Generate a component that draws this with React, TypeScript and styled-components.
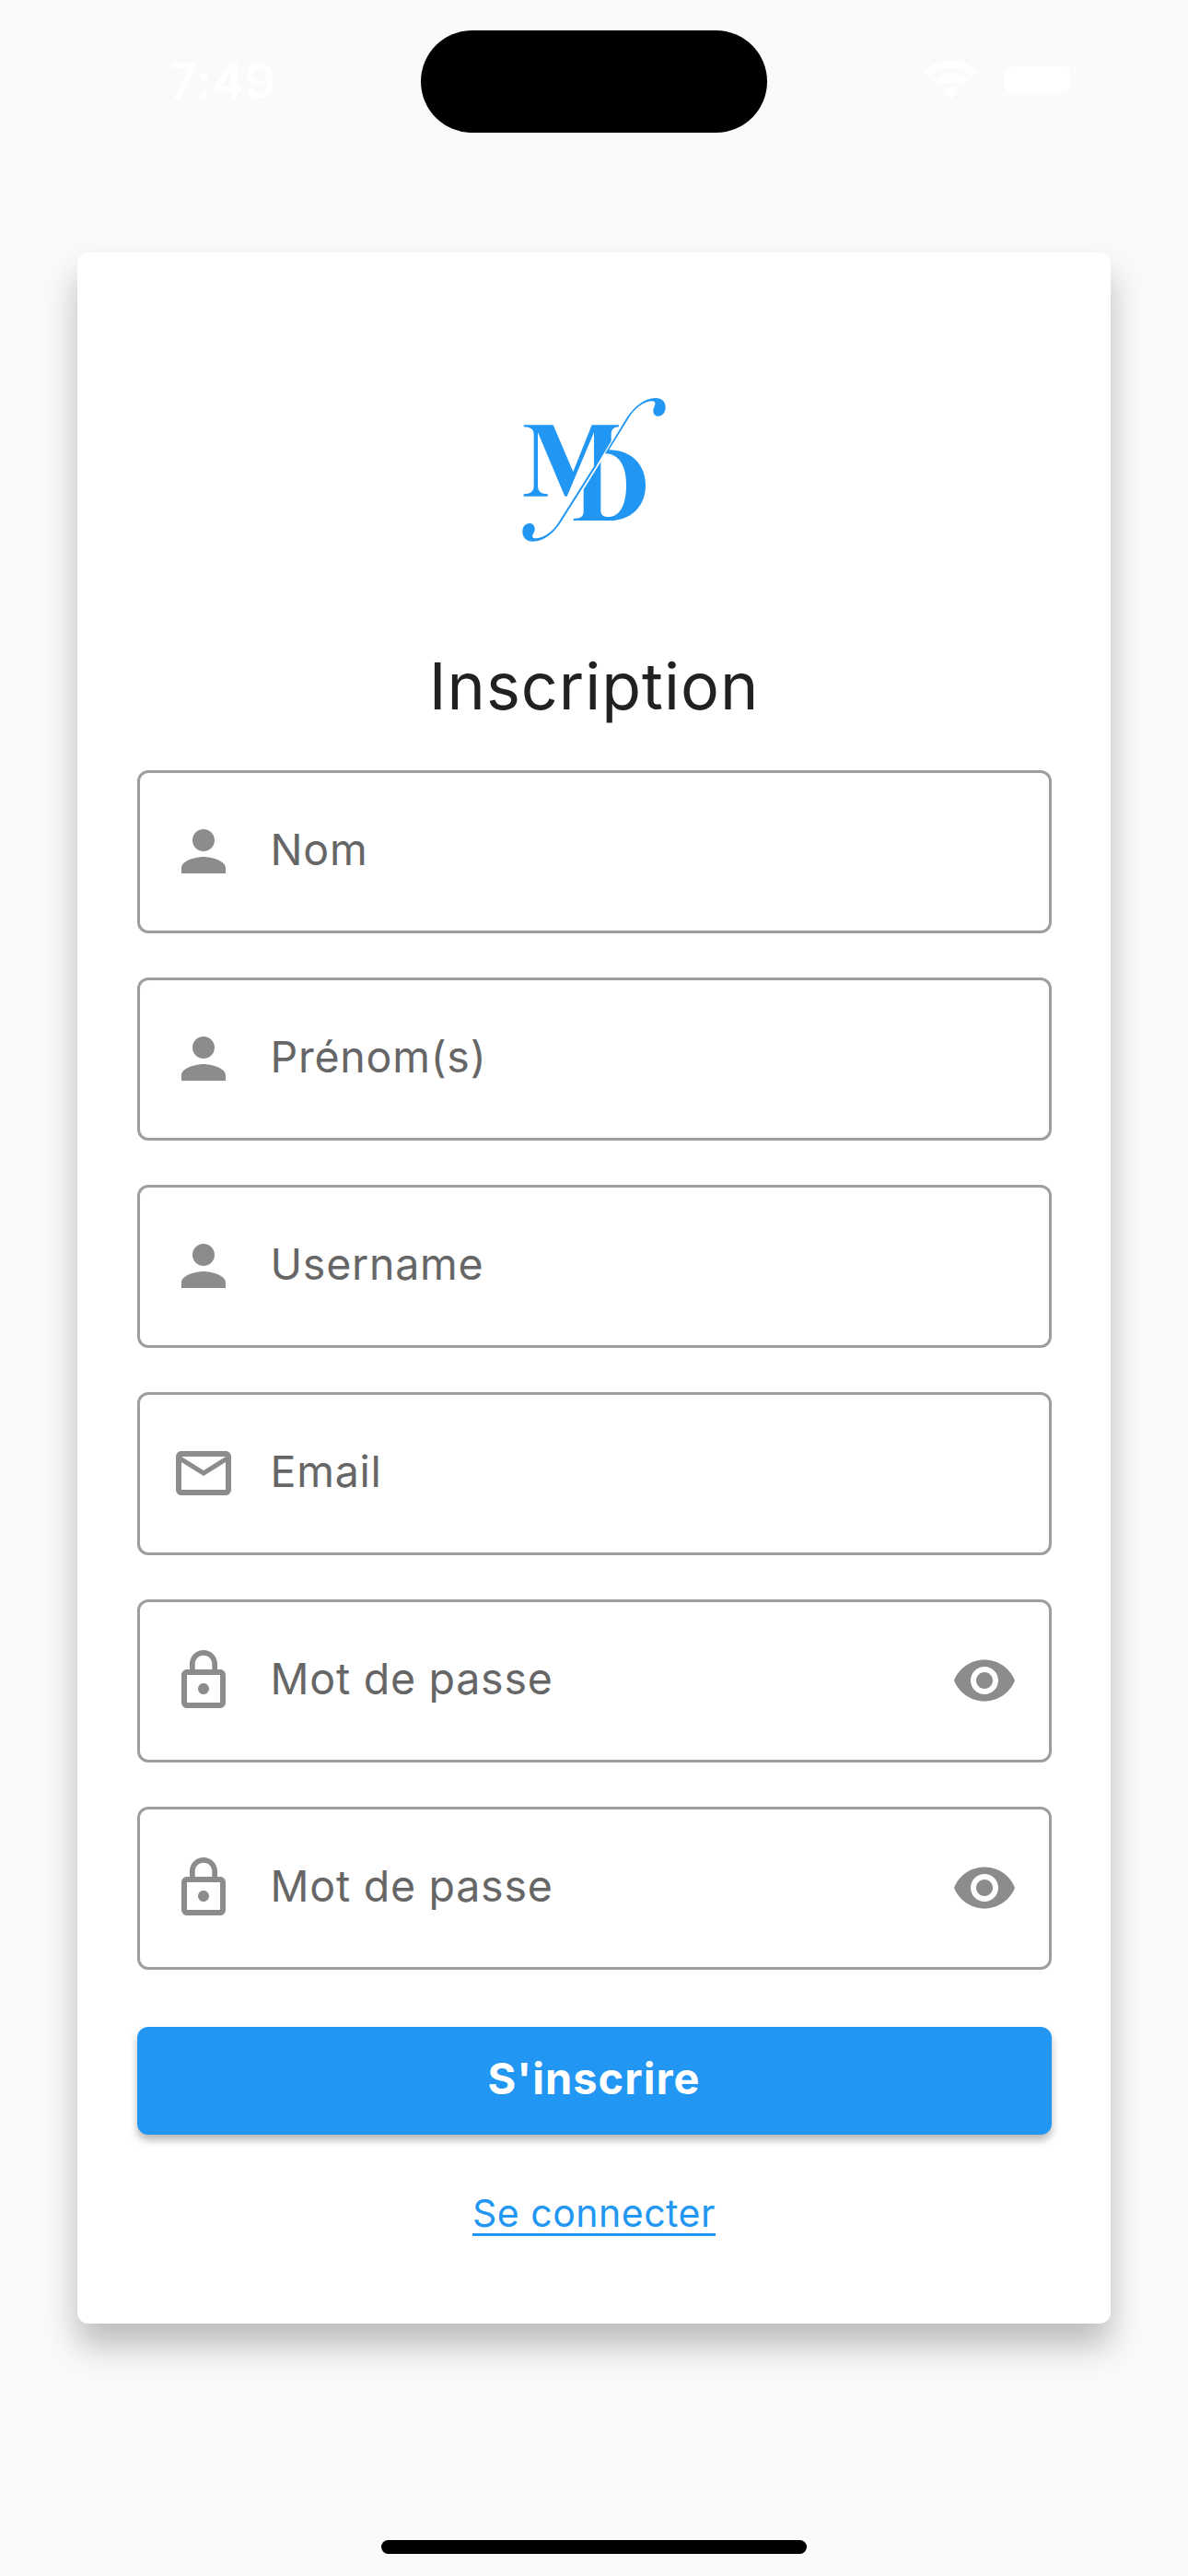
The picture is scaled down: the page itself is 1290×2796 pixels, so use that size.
import React from "react";
import styled, { createGlobalStyle } from "styled-components";

const BLUE = "#2196f3";

const GlobalStyle = createGlobalStyle`
  *, *::before, *::after { box-sizing: border-box; }
  html, body { margin: 0; padding: 0; background: #fafafa; }
  body { font-family: Inter, "Liberation Sans", sans-serif; }
`;

const Screen = styled.div`
  width: 1290px;
  height: 2796px;
  display: flex;
  flex-direction: column;
  align-items: center;
  background: #fafafa;
  overflow: hidden;
`;

const StatusBar = styled.header`
  width: 100%;
  height: 274px;
  flex: none;
  padding-top: 33px;
  display: grid;
  grid-template-columns: 457px 376px 1fr;
  align-items: start;
`;

const Clock = styled.time`
  padding: 27px 0 0 184px;
  font-size: 53px;
  line-height: 56px;
  font-weight: 600;
  letter-spacing: 0.2px;
  color: #fff;
`;

const Island = styled.div`
  height: 111px;
  border-radius: 56px;
  background: #000;
`;

const StatusIcons = styled.div`
  display: flex;
  padding: 31px 0 0 82px;
`;

const Card = styled.main`
  width: 1122px;
  height: 2248px;
  flex: none;
  padding: 136px 64.5px 0;
  display: flex;
  flex-direction: column;
  align-items: center;
  border-radius: 12px;
  background: #fff;
  box-shadow: 0 24px 36px rgba(0, 0, 0, 0.25);
`;

const LogoMark = styled.svg`
  width: 210px;
  height: 200px;
  flex: none;
  fill: ${BLUE};
`;

const Title = styled.h1`
  margin: 90px 0 0;
  height: 92px;
  line-height: 90px;
  font-size: 70px;
  font-weight: 380;
  letter-spacing: 1px;
  color: #212121;
`;

const Form = styled.form`
  width: 100%;
  margin-top: 44px;
  display: flex;
  flex-direction: column;
  gap: 48px;
`;

const Field = styled.label`
  height: 177px;
  display: flex;
  align-items: center;
  padding: 0 34px 2px 33px;
  border: 3px solid #9e9e9e;
  border-radius: 12px;
  color: #8c8c8c;
`;

const FieldText = styled.span`
  flex: 1;
  margin-left: 37px;
  padding-bottom: 4px;
  font-size: 46.5px;
  font-weight: 370;
  line-height: 60px;
  letter-spacing: 0.75px;
  color: #666;
`;

const SubmitButton = styled.button`
  width: 100%;
  height: 117px;
  margin-top: 13.5px;
  padding: 0 0 4px;
  border: 0;
  border-radius: 12px;
  background: ${BLUE};
  color: #fff;
  font-family: inherit;
  font-size: 47px;
  font-weight: 700;
  line-height: 60px;
  letter-spacing: 1px;
  box-shadow: 0 6px 9px rgba(0, 0, 0, 0.28);
`;

const LoginLink = styled.a`
  margin-top: 60px;
  height: 50px;
  line-height: 50px;
  font-size: 41px;
  font-weight: 370;
  letter-spacing: 0.5px;
  color: ${BLUE};
  border-bottom: 3px solid ${BLUE};
`;

const HomeIndicator = styled.div`
  width: 462px;
  height: 15px;
  margin-top: 235px;
  flex: none;
  border-radius: 8px;
  background: #000;
`;

const Glyph = styled.svg`
  width: 72px;
  height: 72px;
  flex: none;
  fill: currentColor;
`;

const icons = {
  person:
    "M12 12c2.21 0 4-1.79 4-4s-1.79-4-4-4-4 1.79-4 4 1.79 4 4 4zm0 2c-2.67 0-8 1.34-8 4v2h16v-2c0-2.66-5.33-4-8-4z",
  mail: "M20 4H4c-1.1 0-2 .9-2 2v12c0 1.1.9 2 2 2h16c1.1 0 2-.9 2-2V6c0-1.1-.9-2-2-2zm0 14H4V8l8 5 8-5v10zm-8-7L4 6h16l-8 5z",
  lock: "M12 17c1.1 0 2-.9 2-2s-.9-2-2-2-2 .9-2 2 .9 2 2 2zm6-9h-1V6c0-2.76-2.24-5-5-5S7 3.24 7 6v2H6c-1.1 0-2 .9-2 2v10c0 1.1.9 2 2 2h12c1.1 0 2-.9 2-2V10c0-1.1-.9-2-2-2zM8.9 6c0-1.71 1.39-3.1 3.1-3.1s3.1 1.39 3.1 3.1v2H8.9V6zM18 20H6V10h12v10z",
  eye: "M12 4.5C7 4.5 2.73 7.61 1 12c1.73 4.39 6 7.5 11 7.5s9.27-3.11 11-7.5c-1.73-4.39-6-7.5-11-7.5zM12 17c-2.76 0-5-2.24-5-5s2.24-5 5-5 5 2.24 5 5-2.24 5-5 5zm0-8c-1.66 0-3 1.34-3 3s1.34 3 3 3 3-1.34 3-3-1.34-3-3-3z",
};

type IconName = keyof typeof icons;

const Icon = ({ name }: { name: IconName }) => (
  <Glyph viewBox="0 0 24 24" aria-hidden="true">
    <path d={icons[name]} />
  </Glyph>
);

/* Two interlocking halves: the left one ends in the lower swash, the right one in the upper swash. */
const Logo = () => (
  <LogoMark viewBox="0 0 630 600" aria-hidden="true">
    <path d="M86 154H182L247 306L308 154H396V160C380 160 371 168 371 184V206L321 290L209 467C184 507 151 533 115 533C95 533 82 520 82 501C82 485 92 474 105 474C119 474 128 490 118 506C111 516 113 524 128 523C152 521 180 503 201 469L315 288V178L227 386H220L132 178V352C132 370 142 379 164 379V386H86V379C108 379 119 370 119 352V184C119 168 108 160 86 160Z" />
    <path d="M364 235C438 235 483 285 483 350C483 418 436 465 366 465H248V459C270 459 281 453 281 436V364L337 274V432C337 446 345 453 360 453C402 453 420 410 420 350C420 286 397 248 351 247L422 130C445 96 478 66 516 66C535 66 548 78 548 95C548 112 538 125 524 125C508 125 504 108 512 92C517 82 514 76 503 76C475 78 446 101 427 133Z" />
  </LogoMark>
);

const fields: { text: string; icon: IconName; secret?: boolean }[] = [
  { text: "Nom", icon: "person" },
  { text: "Prénom(s)", icon: "person" },
  { text: "Username", icon: "person" },
  { text: "Email", icon: "mail" },
  { text: "Mot de passe", icon: "lock", secret: true },
  { text: "Mot de passe", icon: "lock", secret: true },
];

const App = () => (
  <>
    <GlobalStyle />
    <Screen>
      <StatusBar>
        <Clock>7:49</Clock>
        <Island />
        <StatusIcons>
          <svg width="266" height="46" viewBox="915 64 266 46" fill="none">
            <g fill="#fbfbfb">
              <circle cx="921.5" cy="101" r="5.5" />
              <circle cx="939.5" cy="101" r="5.5" />
              <circle cx="957.5" cy="101" r="5.5" />
              <circle cx="975.5" cy="101" r="5.5" />
            </g>
            <path d="M1006 80.500A38 38 0 0 1 1059 80.500" stroke="#fff" strokeWidth="8.500" />
            <path d="M1016.500 91A23 23 0 0 1 1048.500 91" stroke="#fff" strokeWidth="8.500" />
            <path d="M1023.500 98.500A13 13 0 0 1 1041.500 98.500L1032.500 107.500Z" fill="#fff" />
            <rect x="1085" y="66.500" width="82" height="40" rx="12" stroke="#fcfcfc" strokeWidth="3" />
            <rect x="1091" y="72" width="71" height="29" rx="8" fill="#fff" />
            <path d="M1173 80C1179 82 1179 91 1173 93Z" fill="#fcfcfc" />
          </svg>
        </StatusIcons>
      </StatusBar>
      <Card>
        <Logo />
        <Title>Inscription</Title>
        <Form>
          {fields.map((field, index) => (
            <Field key={index}>
              <Icon name={field.icon} />
              <FieldText>{field.text}</FieldText>
              {field.secret && <Icon name="eye" />}
            </Field>
          ))}
          <SubmitButton type="button">S'inscrire</SubmitButton>
        </Form>
        <LoginLink>Se connecter</LoginLink>
      </Card>
      <HomeIndicator />
    </Screen>
  </>
);

export default App;
